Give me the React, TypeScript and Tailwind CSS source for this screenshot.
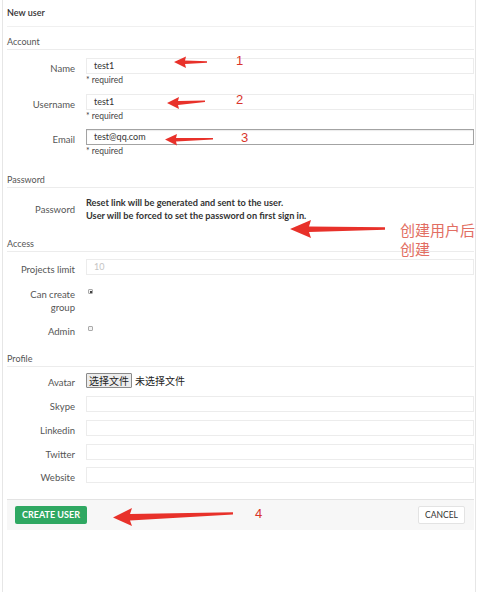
import React from 'react';

const font = { fontFamily: 'Lato, "Noto Sans CJK SC", sans-serif' };

function SectionHeader({ title, className = '' }: { title: string; className?: string }) {
  return (
    <div className={`flex items-end border-b border-[#ececec] pb-[2px] text-[9px] leading-[11px] text-[#555] ${className}`}>
      {title}
    </div>
  );
}

function Field({
  label,
  value = '',
  focused = false,
  required = false,
  faded = false,
  className = '',
}: {
  label: string;
  value?: string;
  focused?: boolean;
  required?: boolean;
  faded?: boolean;
  className?: string;
}) {
  return (
    <div className={className}>
      <div className="flex h-[16px] items-start">
        <div className="mt-[5px] w-[68px] shrink-0 text-right text-[9.5px] leading-[11px] text-[#555]">{label}</div>
        <div
          className={`ml-[11px] flex h-[16px] flex-1 items-center px-[7px] text-[9px] ${
            focused
              ? 'border border-[#a3a3a3] shadow-[inset_0_1px_1px_rgba(0,0,0,0.08)]'
              : 'border border-[#ececec]'
          } ${faded ? 'text-[#c4c4c4]' : 'text-[#333]'}`}
        >
          {value}
        </div>
      </div>
      {required && (
        <div className="ml-[79px] flex h-[13px] items-center text-[8.5px] leading-[11px] text-[#444]">* required</div>
      )}
    </div>
  );
}

function Checkbox({ checked }: { checked?: boolean }) {
  return (
    <span className="flex h-[5px] w-[5px] items-center justify-center rounded-[1px] border border-[#aaa] bg-[#f4f4f4]">
      {checked && <span className="h-[2px] w-[2px] bg-[#444]" />}
    </span>
  );
}

function Annotations() {
  const num = { fontFamily: '"Liberation Sans", sans-serif' };
  return (
    <div className="pointer-events-none absolute inset-0">
      <svg width="479" height="592" className="absolute left-0 top-0">
        <g fill="#e8312a">
          <polygon points="174,62 186,56.5 185,60.5 207,61.3 207,62.7 185,64 186,68" />
          <polygon points="167,103 179,97 178,101 205,100.6 205,102 178,105 179,109" />
          <polygon points="165,139.5 177,134 176,138 213,138 213,139.4 176,141.5 177,145.5" />
          <polygon points="290,229 311,220 309,226.5 385,227.3 385,229.7 309,232 311,238" />
          <polygon points="113,517.5 132,508 130,514 233,512.2 233,514.4 130,520.5 132,526" />
        </g>
      </svg>
      <div className="absolute left-[236px] top-[53px] text-[13px] leading-[16px] text-[#d9342b]" style={num}>1</div>
      <div className="absolute left-[236px] top-[92px] text-[13px] leading-[16px] text-[#d9342b]" style={num}>2</div>
      <div className="absolute left-[241px] top-[130px] text-[13px] leading-[16px] text-[#d9342b]" style={num}>3</div>
      <div className="absolute left-[255px] top-[506px] text-[13px] leading-[16px] text-[#d9342b]" style={num}>4</div>
      <div
        className="absolute left-[400px] top-[220px] text-[15px] leading-[19px] text-[#e26e62]"
        style={{ fontFamily: '"Noto Sans CJK SC", sans-serif' }}
      >
        创建用户后
        <br />
        创建
      </div>
    </div>
  );
}

export default function App() {
  return (
    <div className="relative h-[592px] w-[479px] overflow-hidden bg-white" style={font}>
      <div className="ml-[2px] flex h-full w-[474px] flex-col border-x border-[#e6e6e6] pl-[4px] pr-[1px]">
        <div className="flex h-[27px] items-center border-b border-[#f0f0f0] text-[9px] font-semibold text-[#333]">
          New user
        </div>

        <SectionHeader title="Account" className="h-[23px]" />
        <Field label="Name" value="test1" required className="mt-[8px]" />
        <Field label="Username" value="test1" required className="mt-[7px]" />
        <Field label="Email" value="test@qq.com" focused required className="mt-[6px]" />

        <SectionHeader title="Password" className="h-[30px]" />
        <div className="mt-[8px] flex">
          <div className="flex w-[68px] shrink-0 items-center justify-end pt-[3px] text-[9.5px] text-[#555]">Password</div>
          <div className="ml-[11px] text-[9.2px] font-bold leading-[13px] text-[#333]">
            <div>Reset link will be generated and sent to the user.</div>
            <div>User will be forced to set the password on first sign in.</div>
          </div>
        </div>

        <SectionHeader title="Access" className="h-[30px]" />
        <Field label="Projects limit" value="10" faded className="mt-[7px]" />
        <div className="mt-[13px] flex">
          <div className="w-[68px] shrink-0 text-right text-[9.5px] leading-[13px] text-[#555]">
            Can create
            <br />
            group
          </div>
          <div className="ml-[13px] flex pt-[1px]">
            <Checkbox checked />
          </div>
        </div>
        <div className="mt-[11px] flex items-start">
          <div className="w-[68px] shrink-0 text-right text-[9.5px] leading-[13px] text-[#555]">Admin</div>
          <div className="ml-[13px] flex pt-[1px]">
            <Checkbox />
          </div>
        </div>

        <SectionHeader title="Profile" className="h-[29px]" />
        <div className="mt-[6px] flex h-[15px] items-start">
          <div className="mt-[4px] w-[68px] shrink-0 text-right text-[9.5px] leading-[11px] text-[#555]">Avatar</div>
          <div className="ml-[11px] flex items-center text-[10px] text-[#222]" style={{ fontFamily: '"Noto Sans CJK SC", sans-serif' }}>
            <span className="flex h-[15px] items-center rounded-[1px] border border-[#8a8a8a] bg-[#ececec] px-[2px] leading-none">
              选择文件
            </span>
            <span className="ml-[3px] leading-none">未选择文件</span>
          </div>
        </div>
        <Field label="Skype" className="mt-[8px]" />
        <Field label="Linkedin" className="mt-[8px]" />
        <Field label="Twitter" className="mt-[8px]" />
        <Field label="Website" className="mt-[7px]" />

        <div className="mt-[16px] flex h-[31px] items-center justify-between border-t border-[#e3e3e3] bg-[#f7f7f7] px-[8px]">
          <button className="flex h-[18px] w-[72px] items-center justify-center rounded-[2px] bg-[#2fa862] text-[9px] font-bold text-white">
            CREATE USER
          </button>
          <button className="mr-[1px] flex h-[18px] w-[47px] items-center justify-center rounded-[2px] border border-[#e3e3e3] bg-white text-[8.5px] text-[#333]">
            CANCEL
          </button>
        </div>
      </div>
      <Annotations />
    </div>
  );
}
